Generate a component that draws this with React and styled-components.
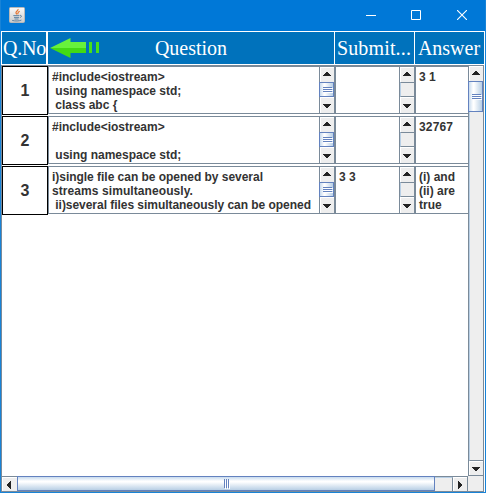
import React from "react";
import styled, { createGlobalStyle, css } from "styled-components";

const GlobalStyle = createGlobalStyle`
  * { box-sizing: border-box; }
  body { margin: 0; overflow: hidden; }
`;

const Window = styled.div`
  width: 486px;
  height: 493px;
  display: flex;
  flex-direction: column;
  background: #0078d7;
  border: 1px solid #1883d7;
  border-top: 0;
  color: #333;
  font: bold 12px/14px "Liberation Sans", Arial, sans-serif;
`;

const TitleBar = styled.header`
  height: 31px;
  flex: none;
  display: flex;
  align-items: flex-start;
  justify-content: space-between;
  padding-left: 8px;
`;

const AppIcon = styled.svg`
  margin-top: 7px;
`;

const Controls = styled.div`
  display: flex;
`;

const ControlButton = styled.button`
  width: 46px;
  height: 30px;
  padding: 0;
  border: 0;
  background: transparent;
  display: grid;
  place-items: center;
`;

const Content = styled.main`
  flex: 1;
  min-height: 0;
  display: grid;
  grid-template-rows: 34px 1fr 16px;
  background: #fff;
  border-right: 1px solid #fff;
`;

const HeaderRow = styled.div`
  display: grid;
  grid-template-columns: 45px 286px 79px 69px;
  column-gap: 1px;
  padding: 1px 0 1px 1px;

  & > :first-child {
    width: 44px;
  }
`;

const HeaderCell = styled.div`
  height: 32px;
  min-width: 0;
  display: flex;
  align-items: center;
  justify-content: center;
  position: relative;
  background: #0072bc;
  color: #fff;
  font: 20px/32px "Liberation Serif", "Times New Roman", serif;
  letter-spacing: ${(p) => p.$spacing || "0"};
  padding: ${(p) => p.$padding || "0"};
  white-space: nowrap;
`;

const Arrow = styled.svg`
  position: absolute;
  left: 1px;
  top: 5px;
`;

const Viewport = styled.div`
  display: grid;
  grid-template-columns: 466px 16px;
  min-height: 0;
  border-top: 1px solid #7a8a99;
  border-left: 1px solid #7a8a99;
`;

const Rows = styled.div`
  min-width: 0;
`;

const Row = styled.div`
  height: 50px;
  display: grid;
  grid-template-columns: 46px 287px 80px 53px;
`;

const NumberCell = styled.div`
  height: 49px;
  border: 1px solid #000;
  display: flex;
  align-items: center;
  justify-content: center;
  font-size: 16px;
`;

const TextPane = styled.div`
  height: 48px;
  display: grid;
  grid-template-columns: minmax(0, 1fr) ${(p) => (p.$scroll ? "15px" : "")};
  border: 1px solid #7a8a99;
  ${(p) => !p.$scroll && css`border-right: 0;`}
`;

const Copy = styled.div`
  padding: 3px 0 0 3px;
  overflow: hidden;
`;

const Line = styled.div`
  height: 14px;
  white-space: pre;
  letter-spacing: ${(p) => p.$spacing || 0}px;
`;

const MiniBar = styled.div`
  display: grid;
  grid-template-rows: 15px 15px 16px;
  border-left: 1px solid #7a8a99;
  background: #eee;
`;

const ArrowBox = styled.div`
  display: grid;
  place-items: center;
  background: #eee;
  border-top: 1px solid #fff;
  border-left: 1px solid #fff;
  padding-right: 2px;
  padding-bottom: ${(p) => (p.$raised ? "2px" : "0")};
`;

const MiniTrack = styled.div`
  border: 1px solid #7a8a99;
  border-left-color: #b8cfe5;
  border-right: 0;
`;

const Thumb = styled.div`
  display: grid;
  place-items: center;
  border: 1px solid #6382bf;
  margin-left: ${(p) => (p.$horizontal ? "0" : "-1px")};
  margin-top: ${(p) => (p.$horizontal ? "-1px" : "0")};
  padding-left: 2px;
  background: ${(p) =>
    p.$horizontal
      ? "linear-gradient(180deg, #c8dbee 0%, #fff 32%, #fff 38%, #b8cfe5 100%)"
      : "linear-gradient(90deg, #c8dbee 0%, #fff 32%, #fff 38%, #b8cfe5 100%)"};
`;

const VerticalBar = styled.div`
  display: grid;
  grid-template-rows: 15px 31px 1fr 14px;
  background: #eee;
  border: 1px solid #7a8a99;
  border-top: 0;
`;

const VerticalTrack = styled.div`
  border-left: 1px solid #b8cfe5;
  border-bottom: 1px solid #7a8a99;
`;

const BottomBar = styled.div`
  display: grid;
  grid-template-columns: 15px 418px 18px 14px 17px;
  background: #eee;
  border: 1px solid #7a8a99;
  border-right: 0;
`;

const BottomTrack = styled.div`
  border-top: 1px solid #b8cfe5;
  border-right: 1px solid #7a8a99;
`;

const Corner = styled.div`
  margin-top: -1px;
  background: #eee;
  border-left: 1px solid #7a8a99;
  border-right: 1px solid #7a8a99;
`;

const trianglePaths = {
  up: "M3 0h2v1h1v1h1v1h1v1H0V3h1V2h1V1h1z",
  down: "M0 0h8v1H7v1H6v1H5v1H3V3H2V2H1V1H0z",
  left: "M3 0h1v8H3V7H2V6H1V5H0V3h1V2h1V1h1z",
  right: "M0 0h1v1h1v1h1v1h1v2H3v1H2v1H1v1H0z",
};

function Triangle({ dir }) {
  const side = dir === "left" || dir === "right";
  return (
    <svg width={side ? 4 : 8} height={side ? 8 : 4} shapeRendering="crispEdges">
      <path d={trianglePaths[dir]} fill="#222" />
    </svg>
  );
}

function Grip({ horizontal }) {
  return (
    <svg width={horizontal ? 6 : 10} height={horizontal ? 10 : 6} shapeRendering="crispEdges">
      {horizontal ? (
        <>
          <path d="M1.5 1v9M3.5 1v9M5.5 1v9" stroke="#fff" />
          <path d="M.5 0v9M2.5 0v9M4.5 0v9" stroke="#6382bf" />
        </>
      ) : (
        <>
          <path d="M1 1.5h9M1 3.5h9M1 5.5h9" stroke="#fff" />
          <path d="M0 .5h9M0 2.5h9M0 4.5h9" stroke="#6382bf" />
        </>
      )}
    </svg>
  );
}

function CellScrollbar({ active }) {
  return (
    <MiniBar>
      <ArrowBox $raised><Triangle dir="up" /></ArrowBox>
      {active ? <Thumb><Grip /></Thumb> : <MiniTrack />}
      <ArrowBox><Triangle dir="down" /></ArrowBox>
    </MiniBar>
  );
}

function CellText({ lines }) {
  return (
    <Copy>
      {lines.map(([text, spacing], i) => (
        <Line key={i} $spacing={spacing}>{text}</Line>
      ))}
    </Copy>
  );
}

function JavaIcon() {
  return (
    <AppIcon width="16" height="16" viewBox="0 0 16 16">
      <defs>
        <linearGradient id="tile" x2="0" y2="1">
          <stop stopColor="#fafafa" />
          <stop offset="1" stopColor="#cbcbcb" />
        </linearGradient>
      </defs>
      <rect x=".5" y=".5" width="15" height="15" rx="1" fill="url(#tile)" stroke="#b9b9b9" />
      <path d="M9 2c1 1.6-3 2.4-2 4.2l1 1.2M10.7 4.2c-2.5 1-1.5 1.8-1.9 3.2" fill="none" stroke="#e5722c" strokeWidth="1.1" />
      <path d="M4.3 8.6h6M5 10.4h5M5.5 12h4M3.2 13.4c3 .9 7 .7 9.2-.3M10.8 8.4c2.2-.4 2.2 1.7 0 2.2" fill="none" stroke="#527a9d" strokeWidth=".9" />
    </AppIcon>
  );
}

const rows = [
  {
    question: [["#include<iostream>"], [" using namespace std;"], [" class abc {"]],
    submitted: [],
    answer: [["3 1"]],
  },
  {
    question: [["#include<iostream>"], [""], [" using namespace std;"]],
    submitted: [],
    answer: [["32767", 0.15]],
  },
  {
    question: [
      ["i)single file can be opened by several", -0.03],
      ["streams simultaneously.", 0.08],
      [" ii)several files simultaneously can be opened", -0.04],
    ],
    submitted: [["3 3"]],
    answer: [["(i) and"], ["(ii) are"], ["true"]],
  },
];

export default function App() {
  return (
    <>
      <GlobalStyle />
      <Window>
        <TitleBar>
          <JavaIcon />
          <Controls>
            <ControlButton aria-label="Minimize">
              <svg width="12" height="10"><path d="M2 5.5h10" stroke="#fff" /></svg>
            </ControlButton>
            <ControlButton aria-label="Maximize">
              <svg width="10" height="10"><path d="M.5.5h9v9h-9z" fill="none" stroke="#fff" /></svg>
            </ControlButton>
            <ControlButton aria-label="Close">
              <svg width="10" height="10"><path d="M0 0l10 10M10 0L0 10" stroke="#fff" strokeWidth="1.1" /></svg>
            </ControlButton>
          </Controls>
        </TitleBar>
        <Content>
          <HeaderRow>
            <HeaderCell $padding="0 0 0 1px" $spacing="-0.2px">Q.No</HeaderCell>
            <HeaderCell>
              <Arrow width="52" height="22" viewBox="0 0 52 22">
                <defs>
                  <linearGradient id="green" x2="0" y2="1">
                    <stop offset=".48" stopColor="#68f23c" />
                    <stop offset=".52" stopColor="#43da14" />
                  </linearGradient>
                </defs>
                <path d="M1 11L21.500 1v4H37v11H21.500v5z" fill="url(#green)" />
                <path d="M40 5h3v11h-3zM47 5h3v11h-3z" fill="#48e01a" />
              </Arrow>
              Question
            </HeaderCell>
            <HeaderCell $spacing="0.15px" $padding="0 1px 0 0">Submit...</HeaderCell>
            <HeaderCell $padding="0 1px 0 0">Answer</HeaderCell>
          </HeaderRow>
          <Viewport>
            <Rows>
              {rows.map((row, index) => (
                <Row key={index}>
                  <NumberCell>{index + 1}</NumberCell>
                  <TextPane $scroll><CellText lines={row.question} /><CellScrollbar active /></TextPane>
                  <TextPane $scroll><CellText lines={row.submitted} /><CellScrollbar /></TextPane>
                  <TextPane><CellText lines={row.answer} /></TextPane>
                </Row>
              ))}
            </Rows>
            <VerticalBar>
              <ArrowBox $raised><Triangle dir="up" /></ArrowBox>
              <Thumb><Grip /></Thumb>
              <VerticalTrack />
              <ArrowBox><Triangle dir="down" /></ArrowBox>
            </VerticalBar>
          </Viewport>
          <BottomBar>
            <ArrowBox><Triangle dir="left" /></ArrowBox>
            <Thumb $horizontal><Grip horizontal /></Thumb>
            <BottomTrack />
            <ArrowBox><Triangle dir="right" /></ArrowBox>
            <Corner />
          </BottomBar>
        </Content>
      </Window>
    </>
  );
}
